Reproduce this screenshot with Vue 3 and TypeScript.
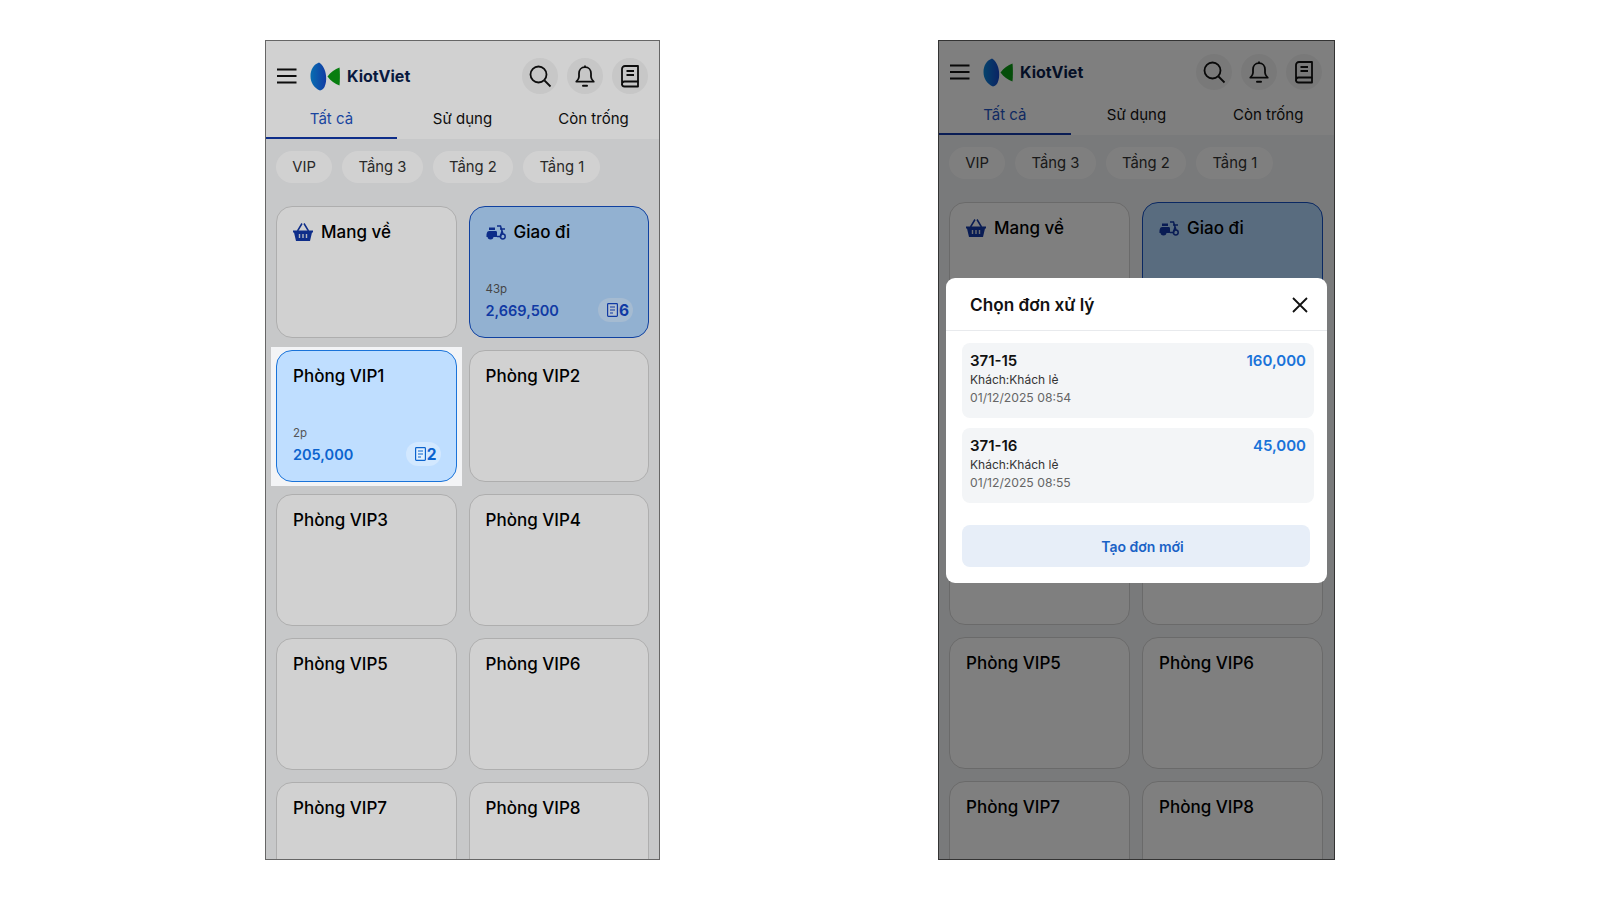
<script setup lang="ts">
type Room = {
  name: string;
  icon?: "basket" | "scooter";
  variant?: "delivery" | "active";
  time?: string;
  amount?: string;
  count?: number;
};

const rooms: Room[] = [
  { name: "Mang về", icon: "basket" },
  { name: "Giao đi", icon: "scooter", variant: "delivery", time: "43p", amount: "2,669,500", count: 6 },
  { name: "Phòng VIP1", variant: "active", time: "2p", amount: "205,000", count: 2 },
  { name: "Phòng VIP2" },
  { name: "Phòng VIP3" },
  { name: "Phòng VIP4" },
  { name: "Phòng VIP5" },
  { name: "Phòng VIP6" },
  { name: "Phòng VIP7" },
  { name: "Phòng VIP8" },
];

const tabs = ["Tất cả", "Sử dụng", "Còn trống"];
const floors = ["VIP", "Tầng 3", "Tầng 2", "Tầng 1"];

const orders = [
  { code: "371-15", customer: "Khách:Khách lẻ", date: "01/12/2025 08:54", total: "160,000" },
  { code: "371-16", customer: "Khách:Khách lẻ", date: "01/12/2025 08:55", total: "45,000" },
];

const screens = [
  { key: "tour", modal: false },
  { key: "picker", modal: true },
];
</script>

<template>
  <div class="page">
    <section
      v-for="screen in screens"
      :key="screen.key"
      class="phone"
      :class="screen.modal ? 'phone--modal' : 'phone--tour'"
    >
      <header class="top">
        <div class="toolbar">
          <svg class="menu" width="20" height="16" viewBox="0 0 20 16">
            <path d="M0 1.500h19.500M0 8h19.500M0 14.500h19.500" stroke="#111" stroke-width="2" fill="none" />
          </svg>
          <svg class="logo" width="30" height="29" viewBox="0 0 30 29">
            <defs>
              <linearGradient :id="`leaf-${screen.key}`" x1="0" y1="0" x2="1" y2="0">
                <stop offset="0" stop-color="#0a86d8" />
                <stop offset="1" stop-color="#1648c8" />
              </linearGradient>
            </defs>
            <path
              d="M9 0.500C3.500 2.500 0.500 8 0.500 14C0.500 20.500 4 26 10 28.500C12 28 13.500 27 14.500 25C16 21.500 16.500 18 16 13.500C15.500 8 13 3 9 0.500Z"
              :fill="`url(#leaf-${screen.key})`"
            />
            <path d="M29.500 5.500C30 10 30 18 29.500 23.500C25 22 20.500 18.500 17.500 14.500C20.500 10.500 25 7 29.500 5.500Z" fill="#0a9a14" />
          </svg>
          <span class="brand">KiotViet</span>
          <div class="actions">
            <button class="round">
              <svg width="24" height="24" viewBox="0 0 24 24" fill="none" stroke="#111" stroke-width="1.800">
                <circle cx="10.500" cy="10.500" r="8" />
                <path d="M16.500 16.500L22.500 22.500" />
              </svg>
            </button>
            <button class="round">
              <svg width="24" height="24" viewBox="0 0 24 24" fill="none" stroke="#111" stroke-width="1.800">
                <path d="M12 3.200c-3.800 0-6 2.800-6 6.300v3.200c0 1.800-1 3.300-2.700 5h17.400c-1.700-1.700-2.700-3.200-2.700-5V9.500c0-3.500-2.200-6.300-6-6.300Z" stroke-linejoin="round" />
                <path d="M12 3.200V1.500" />
                <path d="M10 21.800h4" stroke-width="2" stroke-linecap="round" />
              </svg>
            </button>
            <button class="round">
              <svg width="24" height="24" viewBox="0 0 24 24" fill="none" stroke="#111" stroke-width="1.800">
                <path d="M7 2h13v15.500H6.500A2.500 2.500 0 0 0 4 20V5a3 3 0 0 1 3-3Z" stroke-linejoin="round" />
                <path d="M4 20a2.500 2.500 0 0 0 2.500 2.500H20V17.500" stroke-linejoin="round" />
                <path d="M8.500 7h7.500M8.500 11h7.500" />
              </svg>
            </button>
          </div>
        </div>
        <nav class="tabs">
          <div v-for="(tab, i) in tabs" :key="tab" class="tab" :class="{ 'tab--on': i === 0 }">{{ tab }}</div>
        </nav>
      </header>

      <div class="chips">
        <span v-for="floor in floors" :key="floor" class="chip">{{ floor }}</span>
      </div>

      <div class="grid">
        <div
          v-for="room in rooms"
          :key="room.name"
          class="cell"
          :class="{ 'cell--spot': room.variant === 'active' && !screen.modal }"
        >
          <article class="card" :class="room.variant ? `card--${room.variant}` : ''">
            <div class="card-title">
              <svg v-if="room.icon === 'basket'" class="kind" width="20" height="20" viewBox="0 0 20 20">
                <path d="M0 8.500h20v2h-1L17 19H3L1 10.500H0Z" fill="#1238a8" />
                <path d="M4.500 9L9 1.500M15.500 9L11 1.500" stroke="#1238a8" stroke-width="1.500" fill="none" />
                <path d="M6.500 12v4M10 12v4M13.500 12v4" stroke="#d8dde8" stroke-width="1.400" />
              </svg>
              <svg v-if="room.icon === 'scooter'" class="kind" width="20" height="15" viewBox="0 0 20 15">
                <path d="M3 2.500h6v2.500H3Z" fill="#1238a8" />
                <path d="M3 6h6.500c1 0 1.500.5 1.500 1.500V12H0.500C0.200 9 1 6 3 6Z" fill="#1238a8" />
                <circle cx="4.500" cy="11.500" r="3" fill="#1238a8" />
                <path d="M11 1h3.500l2.500 8M11 11.500h3.500l1.500-5.500M14 4h5" stroke="#1238a8" stroke-width="1.500" fill="none" />
                <circle cx="16.800" cy="11.500" r="2.400" stroke="#1238a8" stroke-width="1.500" fill="none" />
              </svg>
              <span>{{ room.name }}</span>
            </div>
            <div v-if="room.amount" class="card-foot">
              <span class="time">{{ room.time }}</span>
              <div class="foot-row">
                <span class="amount">{{ room.amount }}</span>
                <span class="badge">
                  <svg width="11" height="14" viewBox="0 0 11 14" stroke="currentColor" fill="#fff" fill-opacity="0.35">
                    <rect x="0.600" y="0.600" width="9.800" height="12.800" rx="0.800" stroke-width="1.200" />
                    <path d="M3 4h5M3 7h5M3 10h3" stroke-width="1.200" />
                  </svg>
                  {{ room.count }}
                </span>
              </div>
            </div>
          </article>
        </div>
      </div>

      <div class="scrim"></div>

      <div v-if="screen.modal" class="modal">
        <div class="modal-head">
          <span class="modal-title">Chọn đơn xử lý</span>
          <svg width="16" height="16" viewBox="0 0 16 16">
            <path d="M1 1l14 14M15 1L1 15" stroke="#111" stroke-width="1.800" fill="none" />
          </svg>
        </div>
        <div class="orders">
          <div v-for="order in orders" :key="order.code" class="order">
            <div class="order-row">
              <span class="order-code">{{ order.code }}</span>
              <span class="order-total">{{ order.total }}</span>
            </div>
            <div class="order-customer">{{ order.customer }}</div>
            <div class="order-date">{{ order.date }}</div>
          </div>
        </div>
        <div class="modal-foot">
          <button class="create">Tạo đơn mới</button>
        </div>
      </div>
    </section>
  </div>
</template>

<style>
body {
  background: #fff;
}
</style>

<style scoped>
.page {
  display: flex;
  gap: 278px;
  padding: 40px 0 0 265px;
  font-family: Inter, "Noto Sans", sans-serif;
  color: #111;
}

.phone {
  position: relative;
  box-sizing: border-box;
  height: 820px;
  overflow: hidden;
  background: #f3f4f6;
  border: 1px solid #666;
}

.phone--tour {
  width: 395px;
}

.phone--modal {
  width: 397px;
  border-color: #333;
}

.top {
  background: #fff;
}

.toolbar {
  display: flex;
  align-items: center;
  height: 36px;
  padding: 17px 11px 6px 11px;
}

.phone--modal .toolbar {
  padding: 13px 12px 6px 11px;
}

.menu {
  margin-right: 13px;
}

.logo {
  margin-right: -1px;
}

.brand {
  margin-left: 8px;
  font-size: 16px;
  font-weight: 700;
  color: #0b1f4d;
}

.actions {
  display: flex;
  gap: 9px;
  margin-left: auto;
}

.round {
  display: flex;
  align-items: center;
  justify-content: center;
  width: 36px;
  height: 36px;
  padding: 0;
  border: 0;
  border-radius: 50%;
  background: #f3f3f3;
}

.tabs {
  display: grid;
  grid-template-columns: repeat(3, 1fr);
}

.tab {
  height: 39px;
  box-sizing: border-box;
  padding-top: 9px;
  font-size: 15px;
  line-height: 20px;
  text-align: center;
  color: #111;
}

.tab--on {
  color: #1f55c4;
  border-bottom: 2px solid #1238a8;
}

.chips {
  display: flex;
  gap: 10px;
  padding: 12px 10px 0;
}

.chip {
  height: 32px;
  padding: 0 16.300px;
  border-radius: 16px;
  background: #fff;
  font-size: 14.800px;
  line-height: 32px;
  color: #333;
}

.grid {
  display: grid;
  grid-template-columns: 1fr 1fr;
  grid-auto-rows: 132px;
  gap: 12px;
  padding: 23px 10px 0;
}

.phone--modal .grid {
  grid-template-rows: 135px;
  padding: 23px 11px 0 10px;
}

.cell {
  position: relative;
  display: flex;
}

.cell--spot {
  z-index: 2;
}

.cell--spot::before {
  content: "";
  position: absolute;
  inset: -3px -5px -4px -5px;
  z-index: -1;
  background: #f3f4f6;
}

.card {
  position: relative;
  flex: 1;
  display: flex;
  flex-direction: column;
  justify-content: space-between;
  padding: 14px 15px 15px 16px;
  box-sizing: border-box;
  background: #fff;
  border: 1px solid #d5d5d5;
  border-radius: 16px;
}

.card--delivery {
  background: #b3d8ff;
  border-color: #1450c4;
}

.card--active {
  background: #bfdeff;
  border-color: #1a73d9;
}

.card-title {
  display: flex;
  align-items: center;
  gap: 8px;
  font-size: 17px;
  line-height: 22px;
  font-weight: 500;
  color: #000;
}

.kind {
  flex: none;
}

.card-foot {
  display: flex;
  flex-direction: column;
  gap: 2px;
}

.time {
  font-size: 11.500px;
  line-height: 14px;
  color: #555;
}

.foot-row {
  display: flex;
  align-items: center;
  justify-content: space-between;
}

.amount {
  font-size: 14.500px;
  font-weight: 600;
  color: #1447c8;
}

.card--active .amount {
  color: #0b63ce;
}

.badge {
  display: flex;
  align-items: center;
  gap: 1px;
  height: 24px;
  padding: 0 4px 0 9px;
  border-radius: 12px;
  background: rgba(255, 255, 255, 0.3);
  font-size: 15.500px;
  font-weight: 700;
  color: #1447c8;
}

.card--active .badge {
  color: #0b63ce;
}

.scrim {
  position: absolute;
  inset: 0;
  z-index: 1;
  background: rgba(0, 0, 0, 0.18);
}

.phone--modal .scrim {
  background: rgba(0, 0, 0, 0.5);
}

.modal {
  position: absolute;
  top: 237px;
  left: 7px;
  z-index: 2;
  width: 381px;
  height: 305px;
  box-sizing: border-box;
  background: #fff;
  border-radius: 9px;
}

.modal-head {
  display: flex;
  align-items: center;
  justify-content: space-between;
  height: 53px;
  box-sizing: border-box;
  padding: 1px 19px 0 24px;
  border-bottom: 1px solid #e8eaed;
}

.modal-title {
  font-size: 17.200px;
  font-weight: 600;
}

.orders {
  display: flex;
  flex-direction: column;
  gap: 10px;
  padding: 12px 13px 0 16px;
}

.order {
  height: 75px;
  box-sizing: border-box;
  padding: 8px 8px 0;
  border-radius: 8px;
  background: #f3f5f7;
}

.order-row {
  display: flex;
  justify-content: space-between;
  font-size: 15px;
  line-height: 20px;
  font-weight: 600;
}

.order-total {
  color: #1a73d9;
}

.order-customer {
  font-size: 12px;
  line-height: 18px;
  color: #333;
}

.order-date {
  font-size: 12.200px;
  line-height: 18px;
  color: #666;
}

.modal-foot {
  padding: 22px 17px 0 16px;
}

.create {
  display: block;
  width: 100%;
  height: 42px;
  padding: 0 0 0 13px;
  border: 0;
  border-radius: 8px;
  background: #e7eef8;
  font-family: inherit;
  font-size: 14px;
  font-weight: 600;
  color: #1a62c6;
}
</style>
